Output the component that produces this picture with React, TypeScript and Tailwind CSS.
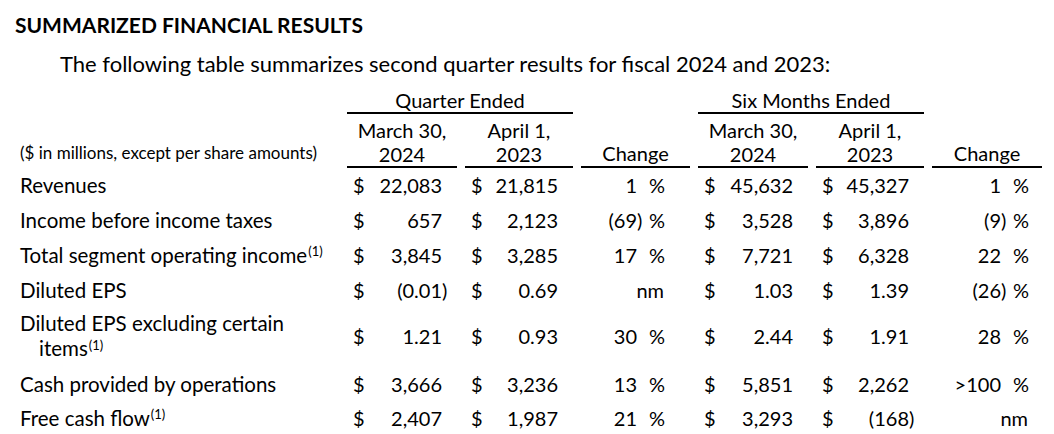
import React from 'react';

type Row = {
  label: string;
  label2?: string;
  sup?: boolean;
  q1: string;
  q2: string;
  c1: string;
  s1: string;
  s2: string;
  c2: string;
  h: string;
};

const rows: Row[] = [
  { label: 'Revenues', q1: '22,083', q2: '21,815', c1: '1', s1: '45,632', s2: '45,327', c2: '1', h: 'h-[34px]' },
  { label: 'Income before income taxes', q1: '657', q2: '2,123', c1: '(69)', s1: '3,528', s2: '3,896', c2: '(9)', h: 'h-[35px]' },
  { label: 'Total segment operating income', sup: true, q1: '3,845', q2: '3,285', c1: '17', s1: '7,721', s2: '6,328', c2: '22', h: 'h-[35px]' },
  { label: 'Diluted EPS', q1: '(0.01)', q2: '0.69', c1: 'nm', s1: '1.03', s2: '1.39', c2: '(26)', h: 'h-[35px]' },
  { label: 'Diluted EPS excluding certain', label2: 'items', sup: true, q1: '1.21', q2: '0.93', c1: '30', s1: '2.44', s2: '1.91', c2: '28', h: 'h-[58px]' },
  { label: 'Cash provided by operations', q1: '3,666', q2: '3,236', c1: '13', s1: '5,851', s2: '2,262', c2: '>100', h: 'h-[37px]' },
  { label: 'Free cash flow', sup: true, q1: '2,407', q2: '1,987', c1: '21', s1: '3,293', s2: '(168)', c2: 'nm', h: 'h-[31px]' },
];

const cols = 'grid grid-cols-[319px_110px_108px_109px_110px_108px_110px] gap-x-2 pl-5';

// accounting style: closing paren hangs past the digits
function splitParen(v: string) {
  return v.endsWith(')') ? [v.slice(0, -1), ')'] : [v, ''];
}

function Money({ value }: { value: string }) {
  const [num, paren] = splitParen(value);
  return (
    <div className="flex items-center pl-[6px] pr-[9px]">
      <span>$</span>
      <span className="ml-auto">{num}</span>
      <span className="w-[6px]">{paren}</span>
    </div>
  );
}

function Change({ value, pad }: { value: string; pad: string }) {
  if (value === 'nm') {
    return <div className={`flex items-center justify-end ${pad}`}>nm</div>;
  }
  const [num, paren] = splitParen(value);
  return (
    <div className={`flex items-center justify-end ${pad}`}>
      <span>{num}</span>
      <span className="w-[5px]">{paren}</span>
      <span className="ml-[7px] w-[15px]">%</span>
    </div>
  );
}

function Sup() {
  return <sup className="text-[13px] ml-[1px]">(1)</sup>;
}

export default function App() {
  return (
    <div className="w-[1054px] h-[434px] bg-white text-black font-['Lato','Liberation_Sans',sans-serif] overflow-hidden">
      <div className="pl-[15px] pt-[11px] text-[21px] font-bold leading-[28px]">SUMMARIZED FINANCIAL RESULTS</div>
      <div className="pl-[60px] mt-[11px] text-[22px] leading-[28px]">
        The following table summarizes second quarter results for fiscal 2024 and 2023:
      </div>

      <div className="text-[20px] leading-[24px]">
        {/* group headings */}
        <div className={cols}>
          <div />
          <div className="col-span-2 h-[36px] flex items-end justify-center border-b-2 border-black">Quarter Ended</div>
          <div />
          <div className="col-span-2 h-[36px] flex items-end justify-center border-b-2 border-black">Six Months Ended</div>
          <div />
        </div>

        {/* column headings */}
        <div className={cols}>
          <div className="flex items-end pb-[5px] text-[17px] leading-[20px]">($ in millions, except per share amounts)</div>
          <div className="pt-[4px] text-center border-b-2 border-black">March 30,<br />2024</div>
          <div className="pt-[4px] text-center border-b-2 border-black">April 1,<br />2023</div>
          <div className="pt-[4px] pb-[1px] flex items-end justify-center border-b-2 border-black">Change</div>
          <div className="pt-[4px] text-center border-b-2 border-black">March 30,<br />2024</div>
          <div className="pt-[4px] text-center border-b-2 border-black">April 1,<br />2023</div>
          <div className="pt-[4px] pb-[1px] flex items-end justify-center border-b-2 border-black">Change</div>
        </div>

        {rows.map((r) => (
          <div key={r.label} className={`${cols} ${r.h}`}>
            {r.label2 ? (
              <div className="flex flex-col justify-center text-[20.5px] leading-[25px]">
                <span>{r.label}</span>
                <span className="pl-[19px]">
                  {r.label2}
                  {r.sup && <Sup />}
                </span>
              </div>
            ) : (
              <div className="flex items-center text-[20.5px]">
                <span>
                  {r.label}
                  {r.sup && <Sup />}
                </span>
              </div>
            )}
            <Money value={r.q1} />
            <Money value={r.q2} />
            <Change value={r.c1} pad="pr-[26px]" />
            <Money value={r.s1} />
            <Money value={r.s2} />
            <Change value={r.c2} pad="pr-[14px]" />
          </div>
        ))}
      </div>
    </div>
  );
}
